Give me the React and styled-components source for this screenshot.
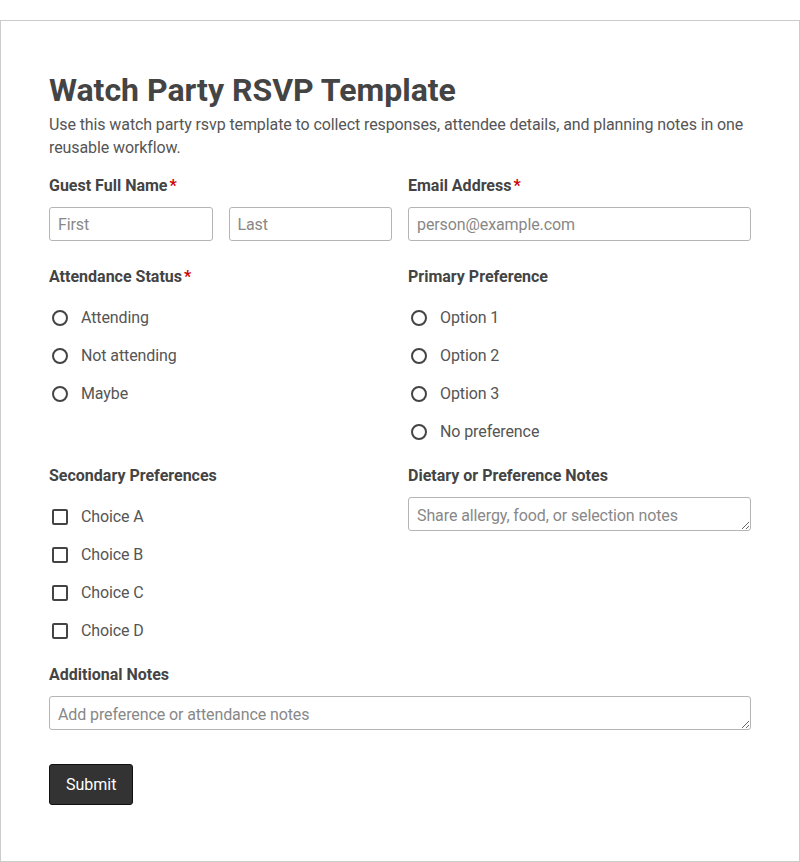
import styled, { createGlobalStyle } from 'styled-components';

const GlobalStyle = createGlobalStyle`
  * {
    box-sizing: border-box;
  }
  body {
    margin: 0;
    background: #fff;
    font-family: Roboto, "Liberation Sans", sans-serif;
    color: #444;
  }
`;

const Card = styled.div`
  margin-top: 20px;
  min-height: calc(100vh - 20px);
  border: 1px solid #ccc;
  padding: 50px 48px 48px;
  background: #fff;
`;

const Title = styled.h1`
  margin: 0;
  font-size: 32px;
  line-height: 38px;
  font-weight: 700;
  color: #444;
`;

const Intro = styled.p`
  margin: 4px 0 17px;
  font-size: 16px;
  line-height: 23px;
  letter-spacing: -0.1px;
  color: #555;
`;

const FieldGrid = styled.div`
  display: grid;
  grid-template-columns: 1fr 1fr;
  column-gap: 16px;
  row-gap: 26px;
`;

const Field = styled.div`
  display: flex;
  flex-direction: column;
  grid-column: ${(p) => (p.$wide ? '1 / -1' : 'auto')};
`;

const Label = styled.label`
  display: block;
  font-size: 16px;
  line-height: 19px;
  font-weight: 700;
  color: #444;
  margin-bottom: 12px;
`;

const Required = styled.span`
  color: #c00;
  margin-left: 2px;
`;

const NameRow = styled.div`
  display: grid;
  grid-template-columns: 1fr 1fr;
  gap: 16px;
`;

const TextInput = styled.input`
  width: 100%;
  height: 34px;
  padding: 6px 8px;
  font: inherit;
  font-size: 16px;
  line-height: 20px;
  letter-spacing: -0.1px;
  color: #444;
  border: 1px solid #b5b5b5;
  border-radius: 3px;
  background: #fff;

  &::placeholder {
    color: #888;
  }
`;

const TextArea = styled.textarea`
  display: block;
  width: 100%;
  height: 34px;
  padding: 8px 8px 4px;
  font: inherit;
  font-size: 16px;
  line-height: 20px;
  letter-spacing: -0.1px;
  color: #444;
  border: 1px solid #b5b5b5;
  border-radius: 3px;
  background: #fff;
  resize: vertical;

  &::placeholder {
    color: #888;
  }
`;

const OptionList = styled.div`
  display: flex;
  flex-direction: column;
  gap: 18px;
  padding-top: 10px;
  margin-bottom: -2px;
`;

const Option = styled.label`
  display: flex;
  align-items: center;
  gap: 13px;
  font-size: 16px;
  line-height: 20px;
  letter-spacing: -0.1px;
  color: #555;
`;

const Choice = styled.input`
  appearance: none;
  width: 16px;
  height: 16px;
  margin: 0 0 0 3px;
  border: 2px solid #444;
  border-radius: ${(p) => (p.type === 'radio' ? '50%' : '2px')};
  background: #fff;
  flex-shrink: 0;
`;

const SubmitButton = styled.button`
  margin-top: 34px;
  padding: 10px 16px;
  font: inherit;
  font-size: 16px;
  line-height: 19px;
  color: #fff;
  background: #333;
  border: 1px solid #111;
  border-radius: 3px;
`;

const attendance = ['Attending', 'Not attending', 'Maybe'];
const primary = ['Option 1', 'Option 2', 'Option 3', 'No preference'];
const secondary = ['Choice A', 'Choice B', 'Choice C', 'Choice D'];

function Options({ type, name, items }) {
  return (
    <OptionList>
      {items.map((item) => (
        <Option key={item}>
          <Choice type={type} name={name} />
          {item}
        </Option>
      ))}
    </OptionList>
  );
}

export default function App() {
  return (
    <>
      <GlobalStyle />
      <Card>
        <Title>Watch Party RSVP Template</Title>
        <Intro>
          Use this watch party rsvp template to collect responses, attendee details, and
          planning notes in one reusable workflow.
        </Intro>
        <form onSubmit={(e) => e.preventDefault()}>
          <FieldGrid>
            <Field>
              <Label>
                Guest Full Name<Required>*</Required>
              </Label>
              <NameRow>
                <TextInput placeholder="First" />
                <TextInput placeholder="Last" />
              </NameRow>
            </Field>
            <Field>
              <Label>
                Email Address<Required>*</Required>
              </Label>
              <TextInput type="email" placeholder="person@example.com" />
            </Field>
            <Field>
              <Label>
                Attendance Status<Required>*</Required>
              </Label>
              <Options type="radio" name="attendance" items={attendance} />
            </Field>
            <Field>
              <Label>Primary Preference</Label>
              <Options type="radio" name="primary" items={primary} />
            </Field>
            <Field>
              <Label>Secondary Preferences</Label>
              <Options type="checkbox" name="secondary" items={secondary} />
            </Field>
            <Field>
              <Label>Dietary or Preference Notes</Label>
              <TextArea rows={1} placeholder="Share allergy, food, or selection notes" />
            </Field>
            <Field $wide>
              <Label>Additional Notes</Label>
              <TextArea rows={1} placeholder="Add preference or attendance notes" />
            </Field>
          </FieldGrid>
          <SubmitButton type="submit">Submit</SubmitButton>
        </form>
      </Card>
    </>
  );
}
